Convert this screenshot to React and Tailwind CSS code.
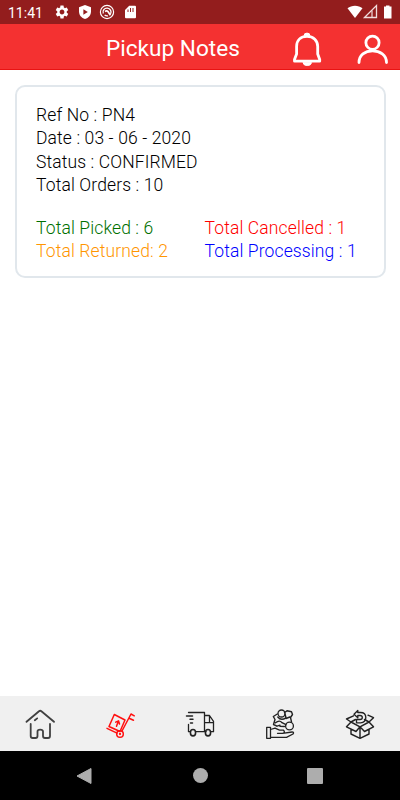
import * as React from 'react';
import { MdSettings } from 'react-icons/md';

function StatusBar() {
  return (
    <div className="flex h-6 shrink-0 items-center bg-[#931d1d] pl-2 text-white">
      <span className="w-[46px] pt-px text-[14px] leading-6">11:41</span>
      <MdSettings className="mr-[7px] size-4" />
      <svg className="mr-[6px] size-4" viewBox="0 0 16 16" fill="none">
        <path d="M8 1 14 3.3V7.5C14 11 11.6 14 8 15 4.400 14 2 11 2 7.500V3.300Z" fill="#fff" />
        <path d="M6.400 5.200V10.800L10.800 8Z" fill="#931d1d" />
      </svg>
      <svg className="mr-[7px] size-4" viewBox="0 0 16 16" fill="none" stroke="#fff">
        <circle cx="8" cy="8" r="6.600" strokeWidth="1.200" />
        <path d="M4.300 9.500A4 4 0 1 1 11.500 10M5.600 10.900A4 4 0 0 0 9 11.800" strokeWidth="1.300" />
        <path d="M6 7.500Q8 6 9.300 8L11.400 11.200" strokeWidth="1.700" />
      </svg>
      <svg className="size-4" viewBox="0 0 16 16">
        <path d="M7.200 1.700H13a1 1 0 0 1 1 1V13.300a1 1 0 0 1-1 1H4a1 1 0 0 1-1-1V6Z" fill="#fff" />
        <path d="M6 5.500v2.500M8.500 4v4M11 4v4" stroke="#931d1d" />
      </svg>
      <svg className="ml-auto h-6 w-[60px]" viewBox="0 0 60 24">
        <path d="M7.500 8.300C11.500 4.800 18.500 4.800 22.500 8.300L15 18Z" fill="#fff" />
        <path d="M24.500 17.500 36.500 5.500V17.500Z" fill="none" stroke="#f0dcdc" strokeWidth="1.300" />
        <path d="M32 10.500V17.500" fill="none" stroke="#f0dcdc" strokeWidth="1.200" />
        <path d="M45.500 6.500H46V5.500H49.500V6.500H51.500V18.500H44V6.500Z" fill="#fff" />
      </svg>
    </div>
  );
}

function Header() {
  return (
    <header className="flex h-[46px] shrink-0 items-center border-b border-[#e91313] bg-[#f43131] text-white">
      <h1 className="ml-[106px] pt-[3px] text-[22.600px] leading-[43px] font-normal">Pickup Notes</h1>
      <svg
        className="ml-auto h-[46px] w-[110px]"
        viewBox="0 0 110 46"
        fill="none"
        stroke="#fff"
        strokeWidth="2.800"
        strokeLinejoin="round"
        strokeLinecap="round"
      >
        <path d="M6.600 30V22.500C6.600 16.500 10.500 12.300 17 12.300S27.700 16.500 27.700 22.500V30L29.700 35.500V37.200H4.500V35.500Z" />
        <path d="M14 11.500A3 2.400 0 0 1 20 11.500ZM13 39A4.300 3 0 0 0 21.500 39Z" fill="#fff" strokeWidth="1" />
        <circle cx="82.500" cy="18.700" r="6.600" />
        <path d="M69 38.500C69 31 75 26.800 82.500 26.800S96.500 31 96.500 38.500" />
      </svg>
    </header>
  );
}

function PickupCard() {
  return (
    <section className="mx-[14.5px] mt-[15px] h-[193px] rounded-[10px] border-2 border-[#e1e7ec] bg-white pt-[17px] pl-[19.500px] text-[17.500px] leading-[23.300px] font-light tracking-[0.120px] text-black">
      <p>Ref No : PN4</p>
      <p>Date : 03 - 06 - 2020</p>
      <p>Status : CONFIRMED</p>
      <p>Total Orders : 10</p>
      <div className="mt-5 grid grid-cols-[168.500px_1fr] whitespace-nowrap">
        <p className="text-[#007000]">Total Picked : 6</p>
        <p className="text-[#ff0000]">Total Cancelled : 1</p>
        <p className="text-[#ff9500]">Total Returned: 2</p>
        <p className="text-[#0000ff]">Total Processing : 1</p>
      </div>
    </section>
  );
}

function TabIcon({ children, className }) {
  return (
    <svg
      className={className}
      width="50"
      height="50"
      viewBox="0 0 50 50"
      fill="none"
      stroke="currentColor"
      strokeWidth="1.300"
      strokeLinejoin="round"
      strokeLinecap="round"
    >
      {children}
    </svg>
  );
}

function TabBar() {
  return (
    <nav className="grid h-[55px] shrink-0 grid-cols-5 justify-items-center bg-[#f0f0f0] pt-1 text-[#222]">
      <TabIcon className="text-[#404040]">
        <g strokeWidth="1.800">
          <path d="M11.500 21.800 24 11.300Q25.200 10.300 26.400 11.300L39 21.800" />
          <path d="M15.700 24V36Q15.700 38 17.700 38H20.500Q22.500 38 22.500 36V31.500Q22.500 29.700 25.200 29.700T28 31.500V36Q28 38 30 38H33Q35 38 35 36V24" />
          <path d="M19.800 20.300 22.200 18.400" />
        </g>
      </TabIcon>
      <TabIcon className="text-[#ff1010]">
        <path d="M19.300 14.500 30 20 25 31.500 14 26.500ZM12 28.300 22 33.200M27 31 36 14 39.300 15.800M34.600 18.500 38.500 20.300" strokeWidth="1.500" />
        <path d="m21.500 26.200 1.800-5M20.700 22.200 23.500 20.800 24.500 24" strokeWidth="1.500" />
        <circle cx="25" cy="34" r="3.300" strokeWidth="1.500" />
        <circle cx="25" cy="34" r=".5" />
      </TabIcon>
      <TabIcon>
        <path d="M13.500 12.500H29.500V31.700H21M30 15.500H34.500L38.500 21.300V31.700H36M30 22.700H38.500M34.500 16V22.500M30 31.700H31M15 31.700H13.500V24.500" />
        <path d="M11.500 16H17.500M15 19.300H18M15.500 23H17.500" strokeWidth="1.500" />
        <ellipse cx="18" cy="32.700" rx="2.600" ry="3.200" strokeWidth="1.600" />
        <ellipse cx="33" cy="32.700" rx="2.600" ry="3.200" strokeWidth="1.600" />
      </TabIcon>
      <TabIcon>
        <path d="M11.700 27.300H15.500V38.300H11.700ZM15.500 29.500 20 28.200 24.500 30.200H28.500Q30.700 32.500 27.500 33.300H22.500M27.500 33.300 37 32Q39.500 32 38 34L31.500 37.300H15.500" />
        <path d="M22.300 14 18.300 16.500 20 19.500 18.500 24.500 22 26.200M29.500 12.500 32 10.800 36.500 11.800 37.500 14.500 35.500 17.500 36.500 21.800M22.800 17Q26 21 31 17.800L30 14M20.500 22.800Q24.500 19.500 27 22.700L31 24.700M25 26.200 29.500 26.500M31 18.500 34.800 17M22 26.200 25 25.200" strokeWidth="1.400" />
        <circle cx="26.500" cy="13.500" r="3.500" />
        <circle cx="34.500" cy="26" r="3.900" />
      </TabIcon>
      <TabIcon>
        <path d="M16 22 25 26.800 34 22M16 22 11.500 26.800 21 31.500 25 26.800 29.500 31.500 38.500 26.800 34 22 38.500 17.700 33 15.200M18.500 15.800 11.500 19 16 22 20.500 19.500M34 22 29.500 19.500M25 26.800V38.300M16 29.500V34L25 38.300 34 34V29.500" strokeWidth="1.450" />
        <path d="M22.800 10.500 19 14.300 22.800 17.800V15.500H25Q27.300 15.500 27.300 17.500T25 19.500H21.500V22.800H25.500Q30.800 22.500 30.800 17.500T25.500 12.500H22.800Z" strokeWidth="1.350" />
      </TabIcon>
    </nav>
  );
}

function SystemNav() {
  return (
    <div className="flex h-[49px] shrink-0 items-center bg-black pl-[75.500px] text-[#adadad]">
      <svg className="size-4" viewBox="0 0 16 16" fill="currentColor" stroke="currentColor" strokeLinejoin="round">
        <path d="M1 8 15 .500V15.500Z" />
      </svg>
      <span className="ml-[101px] size-[15px] rounded-full bg-[#adadad]" />
      <span className="ml-[99.500px] size-4 rounded-[1px] bg-[#adadad]" />
    </div>
  );
}

export default function App() {
  return (
    <div className="flex h-[800px] w-[400px] flex-col overflow-hidden bg-white font-[Roboto,sans-serif]">
      <StatusBar />
      <Header />
      <main className="flex-1">
        <PickupCard />
      </main>
      <TabBar />
      <SystemNav />
    </div>
  );
}
